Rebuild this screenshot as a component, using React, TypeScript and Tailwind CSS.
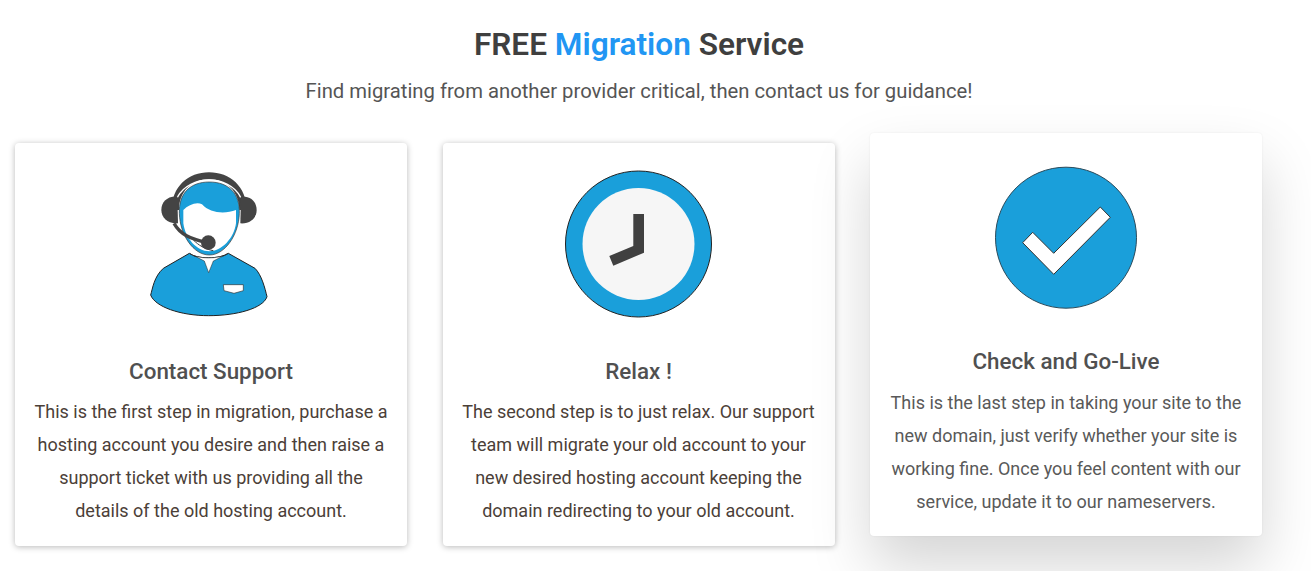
import React from "react";

const Agent = () => (
  <svg viewBox="3 0 480 510" className="block w-[160px] h-[170px]">
    <path d="M125 150 C125 80 175 37 237 37 C300 37 350 80 350 150 L328 150 C328 95 290 58 237 58 C185 58 147 95 147 150 Z" fill="#444444" />
    <path d="M142 112 C160 78 200 60 237 60 C275 60 315 78 332 112" fill="none" stroke="#ffffff" strokeWidth="4" />
    <path d="M142 110 C110 108 94 128 94 150 C94 172 112 192 144 190 Z" fill="#444444" />
    <path d="M333 110 C365 108 380 128 380 150 C380 172 362 192 331 190 Z" fill="#444444" />
    <path d="M148 160 C146 100 180 66 238 66 C296 66 330 100 328 160 C326 225 285 285 238 285 C190 285 150 225 148 160 Z" fill="#1a9fda" stroke="#333333" strokeWidth="2" />
    <path d="M160 150 C175 135 200 124 216 133 C240 160 285 163 318 150 L318 190 C312 235 275 274 238 274 C200 274 166 235 160 190 Z" fill="#ffffff" />
    <path d="M132 190 C150 222 180 238 235 248" fill="none" stroke="#444444" strokeWidth="10" />
    <path d="M190 240 C205 255 225 268 250 272" fill="none" stroke="#444444" strokeWidth="3" />
    <circle cx="235" cy="248" r="22" fill="#444444" />
    <path d="M178 280 C200 298 270 298 295 280 L375 325 C395 345 405 385 411 410 C400 445 320 467 236 467 C150 467 75 440 62 405 C68 385 72 350 100 325 Z" fill="#1a9fda" stroke="#222222" strokeWidth="3" />
    <path d="M180 281 C200 298 270 298 293 281 L250 303 L236 338 L223 303 Z" fill="#ffffff" stroke="#222222" strokeWidth="1.5" />
    <path d="M280 374 L340 374 L340 392 L312 400 L282 392 Z" fill="#ffffff" stroke="#333333" strokeWidth="2" />
  </svg>
);

const Clock = () => (
  <svg viewBox="-1 0 180 170" className="block w-[180px] h-[170px]">
    <circle cx="88.5" cy="84" r="73" fill="#1a9fda" stroke="#222222" strokeWidth="1" />
    <circle cx="88.5" cy="84" r="56" fill="#f6f6f6" />
    <path d="M83.3 54 L94 54 L94 92.7 L63.3 105.7 L59.3 96 L83.3 86 Z" fill="#404040" />
  </svg>
);

const Check = () => (
  <svg viewBox="0 0 170 170" className="block w-[170px] h-[170px]">
    <circle cx="85" cy="87.7" r="70.5" fill="#1a9fda" stroke="#2b4a5a" strokeWidth="1" />
    <path d="M119.3 57 L129.3 67.3 L72.7 124.3 L41.7 92.7 L51.7 82.3 L72.7 103.3 Z" fill="#ffffff" stroke="#333333" strokeWidth="1" />
  </svg>
);

function Card({ icon, title, lines, raised }: { icon: React.ReactNode; title: string; lines: string[]; raised?: boolean }) {
  return (
    <div
      className={
        raised
          ? "w-[392px] h-[403px] -translate-y-[10px] rounded-[4px] bg-white pt-[17px] flex flex-col items-center shadow-[0_30px_60px_rgba(0,0,0,0.17),0_0_2px_rgba(0,0,0,0.08)]"
          : "w-[392px] h-[403px] rounded-[4px] bg-white pt-[17px] flex flex-col items-center shadow-[0_1px_6px_rgba(0,0,0,0.28)]"
      }
    >
      {icon}
      <h3 className="mt-[24px] text-[22.4px] leading-[34px] font-medium text-[#505050]">{title}</h3>
      <div className={raised ? "mt-[8px] text-center text-[18px] leading-[33px] text-[#595959]" : "mt-[7px] text-center text-[18px] leading-[33px] text-[#4b4038]"}>
        {lines.map((l) => (
          <p key={l}>{l}</p>
        ))}
      </div>
    </div>
  );
}

export default function App() {
  return (
    <div className="w-[1311px] h-[571px] overflow-hidden bg-white font-['Roboto',sans-serif]">
      <h2 className="pt-[25px] w-[1278px] text-center text-[31.6px] leading-[40px] font-semibold text-[#3f3f3f]">
        FREE <span className="text-[#2196f3]">Migration</span> Service
      </h2>
      <p className="mt-[10px] w-[1278px] text-center text-[20.25px] leading-[32px] text-[#555555]">
        Find migrating from another provider critical, then contact us for guidance!
      </p>
      <div className="mt-[36px] pl-[15px] flex gap-[35.5px]">
        <Card
          icon={<Agent />}
          title="Contact Support"
          lines={[
            "This is the first step in migration, purchase a",
            "hosting account you desire and then raise a",
            "support ticket with us providing all the",
            "details of the old hosting account.",
          ]}
        />
        <Card
          icon={<Clock />}
          title="Relax !"
          lines={[
            "The second step is to just relax. Our support",
            "team will migrate your old account to your",
            "new desired hosting account keeping the",
            "domain redirecting to your old account.",
          ]}
        />
        <Card
          raised
          icon={<Check />}
          title="Check and Go-Live"
          lines={[
            "This is the last step in taking your site to the",
            "new domain, just verify whether your site is",
            "working fine. Once you feel content with our",
            "service, update it to our nameservers.",
          ]}
        />
      </div>
    </div>
  );
}
